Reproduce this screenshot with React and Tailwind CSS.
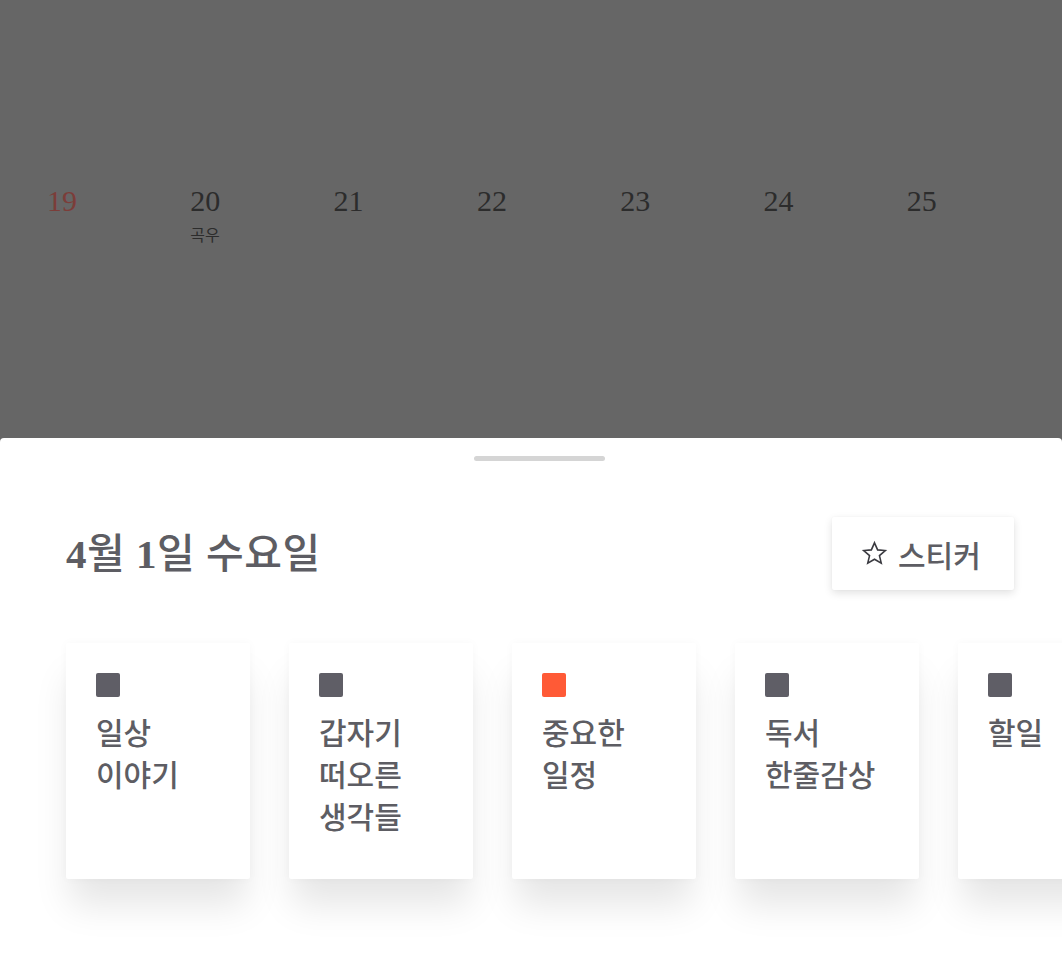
import React from "react";

const days = [
  { n: "19", red: true },
  { n: "20", sub: "곡우" },
  { n: "21" },
  { n: "22" },
  { n: "23" },
  { n: "24" },
  { n: "25" },
];

const cards = [
  { lines: ["일상", "이야기"], color: "bg-[#5f5e66]" },
  { lines: ["갑자기", "떠오른", "생각들"], color: "bg-[#5f5e66]" },
  { lines: ["중요한", "일정"], color: "bg-[#ff5a36]" },
  { lines: ["독서", "한줄감상"], color: "bg-[#5f5e66]" },
  { lines: ["할일"], color: "bg-[#5f5e66]" },
];

const kr = { fontFamily: '"Liberation Serif", "Noto Sans CJK KR", serif' };

export default function App() {
  return (
    <div className="w-[1062px] h-[953px] overflow-hidden flex flex-col bg-[#666666]">
      <div className="h-[438px] shrink-0 pt-[182px] pl-[47px]">
        <div className="grid grid-cols-[repeat(7,143.3px)]">
          {days.map((d) => (
            <div key={d.n} className="flex flex-col">
              <span
                className={`text-[30px] leading-[38px] ${d.red ? "text-[#7c3d39]" : "text-[#2c2c2c]"}`}
                style={kr}
              >
                {d.n}
              </span>
              {d.sub && (
                <span
                  className="text-[16px] leading-[20px] text-[#2c2c2c] mt-[4px]"
                  style={{ fontFamily: '"Noto Sans CJK KR", sans-serif' }}
                >
                  {d.sub}
                </span>
              )}
            </div>
          ))}
        </div>
      </div>
      <div className="flex-1 bg-white rounded-t-[4px] flex flex-col">
        <div className="flex justify-center pt-[18px] pl-[17px]">
          <div className="w-[131px] h-[5px] rounded-full bg-[#d5d5d5]" />
        </div>
        <div className="flex items-center justify-between pl-[66px] pr-[48px] mt-[56px]">
          <h1
            className="text-[41px] leading-[48px] font-medium text-[#5d5d63] tracking-[0.5px]"
            style={kr}
          >
            <span className="font-bold">4</span>월 <span className="font-bold">1</span>일 수요일
          </h1>
          <button
            className="w-[182px] h-[73px] bg-white rounded-[2px] flex items-center pl-[29px] gap-[10px] shadow-[0_3px_8px_rgba(0,0,0,0.12),0_0_2px_rgba(0,0,0,0.04)]"
          >
            <svg width="27" height="27" viewBox="0 0 24 24" fill="none" stroke="#3a3a40" strokeWidth="1.4" strokeLinejoin="miter">
              <path d="M12 2.5l2.8 6.3 6.8.6-5.2 4.5 1.6 6.7L12 17.1l-6 3.5 1.6-6.7-5.2-4.5 6.8-.6z" />
            </svg>
            <span
              className="text-[30px] leading-[36px] font-medium text-[#5d5d63]"
              style={{ fontFamily: '"Noto Sans CJK KR", sans-serif' }}
            >
              스티커
            </span>
          </button>
        </div>
        <div className="flex gap-[39px] pl-[66px] mt-[53px]">
          {cards.map((c, i) => (
            <div
              key={i}
              className="w-[184px] h-[236px] shrink-0 bg-white rounded-[2px] pt-[30px] pl-[30px] shadow-[0_30px_34px_-4px_rgba(0,0,0,0.10),0_0_10px_rgba(0,0,0,0.03)]"
            >
              <div className={`w-[24px] h-[24px] rounded-[2px] ${c.color}`} />
              <div
                className="mt-[13px] text-[30px] leading-[42px] font-medium text-[#5d5d63]"
                style={{ fontFamily: '"Noto Sans CJK KR", sans-serif' }}
              >
                {c.lines.map((l) => (
                  <div key={l}>{l}</div>
                ))}
              </div>
            </div>
          ))}
        </div>
      </div>
    </div>
  );
}
